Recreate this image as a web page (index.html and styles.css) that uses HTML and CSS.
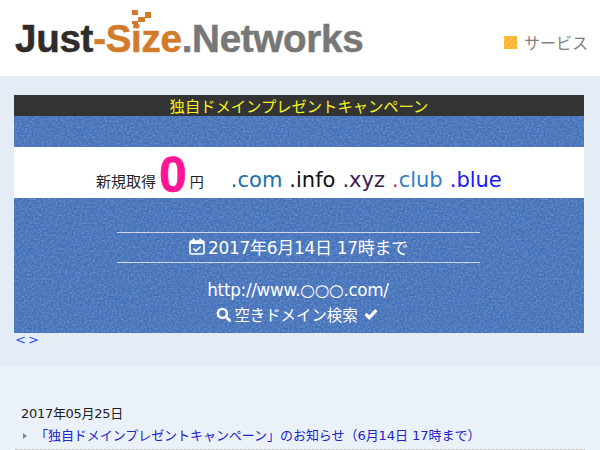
FILE: index.html
```html
<!DOCTYPE html>
<html lang="ja">
<head>
<meta charset="utf-8">
<title>Just-Size.Networks</title>
<link rel="stylesheet" href="styles.css">
</head>
<body>
<header class="site-header">
  <a class="logo" href="#">
    <svg class="logo-mark" viewBox="0 0 24 14" width="24" height="14" aria-hidden="true">
      <rect x="1" y="0" width="6" height="5" fill="#d27a2a"/>
      <rect x="14" y="2" width="6" height="6" fill="#d27a2a"/>
      <rect x="7" y="7" width="7" height="5" fill="#d27a2a"/>
      <rect x="1" y="11" width="6" height="3" fill="#d27a2a"/>
    </svg>
    <span class="logo-dark">Just</span><span class="logo-orange">-Size</span><span class="logo-gray">.Networks</span>
  </a>
  <nav class="nav"><span class="nav-square"></span><span class="nav-label">サービス</span></nav>
</header>
<section class="hero">
  <div class="banner">
    <h1 class="banner-title">独自ドメインプレゼントキャンペーン</h1>
    <div class="blue-gap"></div>
    <div class="price-row">
      <span class="price-label">新規取得</span><span class="price-zero">0</span><span class="price-unit">円</span>
      <span class="tlds">
        <span class="tld-com">.com</span>
        <span class="tld-info">.info</span>
        <span class="tld-xyz">.xyz</span>
        <span class="tld-club"><span class="dot-red">.</span>club</span>
        <span class="tld-blue">.blue</span>
      </span>
    </div>
    <div class="blue-body">
      <div class="deadline">
        <svg class="cal" viewBox="0 0 16 17" width="16" height="17" aria-hidden="true">
          <rect x="1" y="3" width="14" height="13" rx="1.5" fill="none" stroke="#fff" stroke-width="1.6"/>
          <rect x="1" y="3" width="14" height="3" fill="#fff"/>
          <rect x="3.4" y="0.5" width="2.4" height="4" rx="1" fill="#fff"/>
          <rect x="10.2" y="0.5" width="2.4" height="4" rx="1" fill="#fff"/>
          <path d="M4.5 10.5 L7 13 L11.5 8.5" fill="none" stroke="#fff" stroke-width="1.5"/>
        </svg>
        <span>2017年6月14日 17時まで</span>
      </div>
      <div class="url">http://www.○○○.com/</div>
      <div class="search">
        <svg class="icon-search" viewBox="0 0 16 16" width="15" height="15" aria-hidden="true">
          <circle cx="6.8" cy="6.8" r="4.8" fill="none" stroke="#fff" stroke-width="2.6"/>
          <path d="M10.5 10.5 L14.5 14.5" stroke="#fff" stroke-width="3" stroke-linecap="round"/>
        </svg><span>空きドメイン検索</span>
        <svg class="icon-check" viewBox="0 0 14 12" width="14" height="12" aria-hidden="true">
          <path d="M1.6 6 L5.2 9.6 L12.4 2.2" fill="none" stroke="#fff" stroke-width="3.2"/>
        </svg>
      </div>
    </div>
  </div>
  <div class="pager"><a href="#">&lt;</a><a href="#">&gt;</a></div>
</section>
<main class="news">
  <p class="news-date">2017年05月25日</p>
  <p class="news-item"><span class="arrow"></span><a href="#">「独自ドメインプレゼントキャンペーン」のお知らせ（6月14日 17時まで）</a></p>
</main>
</body>
</html>
```
FILE: styles.css
```css
* { box-sizing: border-box; }
html, body { margin: 0; padding: 0; height: 450px; overflow: hidden; }
body {
  font-family: "Open Sans", "Noto Sans", "Noto Sans CJK JP", sans-serif;
  background: #ebf1f9;
  color: #222;
}
.site-header {
  height: 76px;
  background: #fff;
  display: flex;
  justify-content: space-between;
  align-items: center;
  padding: 0 12px 0 15px;
}
.logo {
  position: relative;
  font-family: "Liberation Sans", sans-serif;
  font-weight: 700;
  font-size: 38.6px;
  letter-spacing: -0.3px;
  line-height: 40px;
  text-decoration: none;
  white-space: nowrap;
  margin-top: 2px;
  -webkit-text-stroke: 0.5px currentColor;
}
.logo-mark { position: absolute; left: 116px; top: -9px; }
.logo-dark { color: #2f2b2b; }
.logo-orange { color: #d27a2a; }
.logo-gray { color: #777; }
.nav { display: flex; align-items: center; gap: 7px; margin-top: 8px; }
.nav-square {
  width: 13px;
  height: 13px;
  background: repeating-linear-gradient(135deg, #fdb42c 0 2px, #fbbe4a 2px 4px);
}
.nav-label {
  font-family: "Noto Sans CJK JP", sans-serif;
  font-size: 16px;
  line-height: 20px;
  color: #808080;
}
.hero {
  height: 290px;
  background: #e4ecf6;
  padding: 19px 16px 0 14px;
}
.banner {
  width: 570px;
  background-color: #4270b9;
  background-image: url("data:image/svg+xml,%3Csvg xmlns='http://www.w3.org/2000/svg' width='256' height='256'%3E%3Cfilter id='n'%3E%3CfeTurbulence type='fractalNoise' baseFrequency='0.5' numOctaves='2' stitchTiles='stitch'/%3E%3CfeColorMatrix values='0 0 0 0 0.5 0 0 0 0 0.62 0 0 0 0 0.82 0.7 0 0 0 -0.25'/%3E%3C/filter%3E%3Crect width='256' height='256' filter='url(%23n)'/%3E%3C/svg%3E");
}
.banner-title {
  margin: 0;
  height: 21px;
  background: #333;
  color: #f2f21c;
  font-family: "Noto Sans CJK JP", sans-serif;
  font-size: 15.3px;
  font-weight: 400;
  line-height: 21px;
  text-align: center;
}
.blue-gap { height: 31px; }
.price-row {
  height: 51px;
  background: #fff;
  display: flex;
  align-items: flex-end;
  padding: 0 0 7px 82px;
  line-height: 20px;
}
.price-label { font-family: "Noto Sans CJK JP", sans-serif; font-size: 15px; color: #222; }
.price-zero {
  font-family: "Liberation Sans", sans-serif;
  font-weight: 700;
  font-size: 50px;
  line-height: 40px;
  color: #ff1493;
  margin: 0 3px -4px 3px;
  -webkit-text-stroke: 0.6px #ff1493;
}
.price-unit { font-family: "Noto Sans CJK JP", sans-serif; font-size: 14px; color: #222; }
.tlds {
  display: flex;
  gap: 7px;
  margin-left: 27px;
  margin-bottom: -1px;
  font-family: "DejaVu Sans", sans-serif;
  font-size: 21px;
  line-height: 24px;
}
.tld-com { color: #1a6fae; }
.tld-info { color: #111; }
.tld-xyz { color: #3a1c52; }
.tld-club { color: #2f7ec8; }
.dot-red { color: #d9342b; }
.tld-blue { color: #1a1aff; }
.blue-body {
  height: 135px;
  padding-top: 34px;
  color: #fff;
  text-align: center;
  font-size: 16px;
}
.deadline {
  width: 363px;
  height: 31px;
  margin: 0 auto 0 103px;
  border-top: 1px solid #cfd6e6;
  border-bottom: 1px solid #cfd6e6;
  display: flex;
  justify-content: center;
  align-items: center;
  gap: 3px;
  font-family: "DejaVu Sans", "Noto Sans CJK JP", sans-serif;
  font-size: 17px;
  letter-spacing: -0.3px;
  padding-bottom: 2px;
}
.url {
  margin-top: 16px;
  margin-left: -2px;
  line-height: 22px;
  font-family: "DejaVu Sans", "Noto Sans CJK JP", sans-serif;
  font-size: 16.8px;
  letter-spacing: -0.3px;
}
.search {
  margin-top: 2px;
  margin-left: -4px;
  display: flex;
  justify-content: center;
  align-items: center;
  gap: 3px;
  line-height: 22px;
  font-family: "Noto Sans CJK JP", sans-serif;
  font-size: 15.4px;
}
.icon-check { margin-left: 3px; }
.pager {
  display: flex;
  gap: 2px;
  font-family: "DejaVu Sans", sans-serif;
  font-size: 13px;
  line-height: 14px;
  padding-left: 1px;
}
.pager a { color: #2a4fff; text-decoration: none; }
.news-item a { color: #2222cc; text-decoration: none; }
.news { padding: 39px 0 0 21px; position: relative; height: 84px; }
.news::after {
  content: "";
  position: absolute;
  left: 15px;
  right: 15px;
  bottom: 0;
  border-bottom: 1px dotted #bbb;
}
.news-date {
  margin: 0;
  font-family: "DejaVu Sans", "Noto Sans CJK JP", sans-serif;
  font-size: 13px;
  letter-spacing: -0.3px;
  line-height: 18px;
}
.news-item {
  margin: 4px 0 0;
  display: flex;
  align-items: center;
  font-family: "DejaVu Sans", "Noto Sans CJK JP", sans-serif;
  font-size: 13px;
  letter-spacing: -0.05px;
  line-height: 18px;
}
.arrow {
  width: 0;
  height: 0;
  margin: 0 8px 0 2px;
  border-left: 4px solid #888;
  border-top: 3px solid transparent;
  border-bottom: 3px solid transparent;
}
```
